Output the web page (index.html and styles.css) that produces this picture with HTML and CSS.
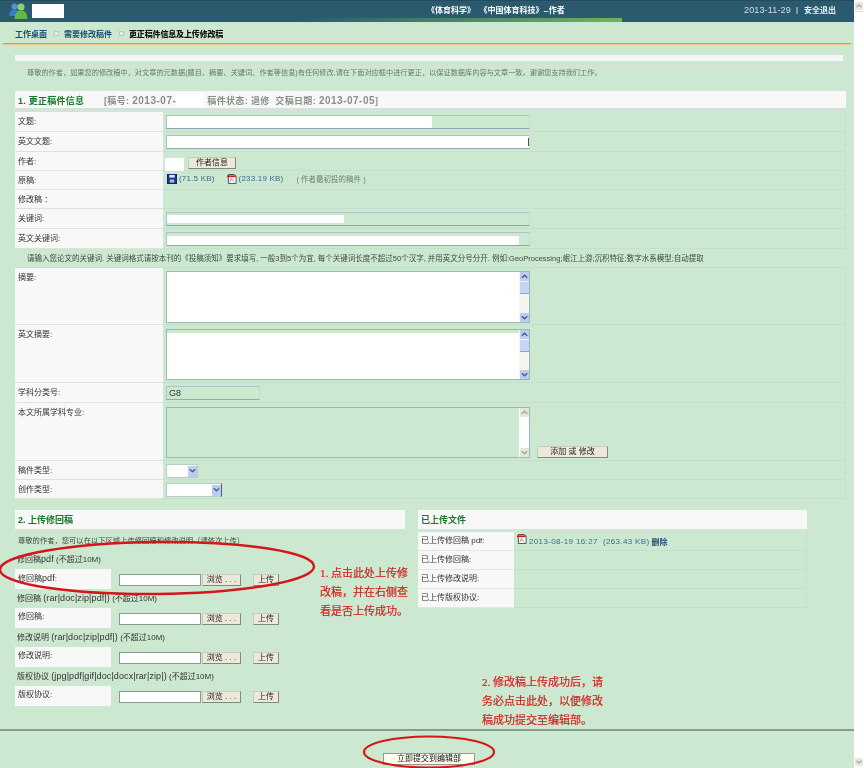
FILE: index.html
```html
<!DOCTYPE html>
<html lang="zh-CN">
<head>
    <meta charset="UTF-8">
    <title>更正稿件信息及上传修改稿</title>
    <link rel="stylesheet" href="styles.css">
</head>
<body>
    <!-- shared icons -->
    <svg class="defs" width="0" height="0">
        <symbol id="ico-up" viewBox="0 0 10 10"><path d="M2 6.5 L5 3.5 L8 6.5" fill="none" stroke="currentColor" stroke-width="1.6"/></symbol>
        <symbol id="ico-down" viewBox="0 0 10 10"><path d="M2 3.5 L5 6.5 L8 3.5" fill="none" stroke="currentColor" stroke-width="1.6"/></symbol>
        <symbol id="ico-pdf" viewBox="0 0 11 11">
            <path d="M1.5 .5 H8 L10 2.5 V10.5 H1.5 Z" fill="#fff" stroke="#444"/>
            <rect x="0" y="1.5" width="9.5" height="2" fill="#d01818"/>
            <path d="M3 9 L5 5 L6 7 L8 8.5" fill="none" stroke="#b55" stroke-width=".8"/>
        </symbol>
        <symbol id="ico-save" viewBox="0 0 11 11">
            <rect x=".5" y=".5" width="10" height="10" fill="#1c2f8c" stroke="#10195c"/>
            <rect x="2.5" y="1" width="6" height="3" fill="#dfe6f5"/>
            <rect x="3" y="6" width="5" height="3.5" fill="#aab8e0"/>
        </symbol>
    </svg>

    <div class="page">
        <div class="topbar">
            <div class="topbar-main">
                <svg class="logo" width="20" height="18" viewBox="0 0 20 18">
                    <circle cx="6.5" cy="4.5" r="3" fill="#4f93dc"/>
                    <path d="M1 14 C1 9 3.5 7.5 6.5 7.5 C9.5 7.5 11 9.5 11 14 Z" fill="#3a7cc8"/>
                    <circle cx="13" cy="5" r="3.6" fill="#8fd069"/>
                    <path d="M6.5 17 C6.5 11 9.5 8.5 13 8.5 C16.5 8.5 19.5 11 19.5 17 Z" fill="#63b843"/>
                </svg>
                <div class="logo-blank"></div>
                <div class="journals">《体育科学》 &nbsp;《中国体育科技》--作者</div>
                <div class="date">2013-11-29</div>
                <div class="pipe">|</div>
                <div class="logout">安全退出</div>
            </div>
            <div class="strip"></div>
        </div>

        <div class="crumbs">
            <a>工作桌面</a><span class="sep"></span><a>需要修改稿件</a><span class="sep"></span><b>更正稿件信息及上传修改稿</b>
        </div>

        <div class="top-blank"></div>
        <p class="notice">尊敬的作者，如果您的修改稿中，对文章的元数据(题目、摘要、关键词、作者等信息)有任何修改,请在下面对应框中进行更正，以保证数据库内容与文章一致。谢谢您支持我们工作。</p>

        <div class="sec-head">
            <span class="sec-title">1. 更正稿件信息</span>
            <span class="sec-meta">[稿号: <i>2013-07-</i></span><span class="redact"></span>
            <span class="sec-meta">稿件状态: 退修 &nbsp;交稿日期: <i>2013-07-05</i>]</span>
        </div>

        <div class="form">
            <div class="lab">文题:</div>
            <div class="val"><div class="fld"><div class="fill fill-title"></div></div></div>
            <div class="lab">英文文题:</div>
            <div class="val"><div class="fld fld-white"><span class="caret"></span></div></div>
            <div class="lab">作者:</div>
            <div class="val val-author"><div class="author-blank"></div><button class="btn btn-author">作者信息</button></div>
            <div class="lab">原稿:</div>
            <div class="val val-files">
                <svg class="ico"><use href="#ico-save"/></svg><a class="size">(71.5 KB)</a>
                <svg class="ico ico-second"><use href="#ico-pdf"/></svg><a class="size">(233.19 KB)</a>
                <span class="hint">( 作者最初投的稿件 )</span>
            </div>
            <div class="lab">修改稿 ：</div>
            <div class="val"></div>
            <div class="lab">关键词:</div>
            <div class="val"><div class="fld"><div class="fill fill-key"></div></div></div>
            <div class="lab">英文关键词:</div>
            <div class="val"><div class="fld"><div class="fill fill-enkey"></div></div></div>
            <p class="key-note">请输入您论文的关键词. 关键词格式请按本刊的《投稿须知》要求填写, 一般3到5个为宜, 每个关键词长度不超过50个汉字, 并用英文分号分开. 例如:GeoProcessing;岷江上游;沉积特征;数字水系模型;自动提取</p>
            <div class="lab">摘要:</div>
            <div class="val">
                <div class="area area-abs">
                    <div class="sb">
                        <span class="sb-btn"><svg><use href="#ico-up"/></svg></span>
                        <span class="sb-thumb"></span>
                        <span class="sb-btn sb-end"><svg><use href="#ico-down"/></svg></span>
                    </div>
                </div>
            </div>
            <div class="lab">英文摘要:</div>
            <div class="val">
                <div class="area area-en">
                    <div class="sb">
                        <span class="sb-btn"><svg><use href="#ico-up"/></svg></span>
                        <span class="sb-thumb"></span>
                        <span class="sb-btn sb-end"><svg><use href="#ico-down"/></svg></span>
                    </div>
                </div>
            </div>
            <div class="lab">学科分类号:</div>
            <div class="val"><div class="fld fld-class">G8</div></div>
            <div class="lab">本文所属学科专业:</div>
            <div class="val val-major">
                <div class="area area-major">
                    <div class="sb sb-off">
                        <span class="sb-btn"><svg><use href="#ico-up"/></svg></span>
                        <span class="sb-btn sb-end"><svg><use href="#ico-down"/></svg></span>
                    </div>
                </div>
                <button class="btn btn-add">添加 或 修改</button>
            </div>
            <div class="lab">稿件类型:</div>
            <div class="val"><div class="sel sel-short"><span class="sb-btn"><svg><use href="#ico-down"/></svg></span></div></div>
            <div class="lab">创作类型:</div>
            <div class="val"><div class="sel sel-long"><span class="sb-btn"><svg><use href="#ico-down"/></svg></span></div></div>
        </div>

        <div class="columns">
            <div class="col-left">
                <div class="head-2">2. 上传修回稿</div>
                <p class="up-note">尊敬的作者，您可以在以下区域上传修回稿和修改说明（请依次上传）</p>

                <div class="cap">修回稿<i>pdf</i> (不超过10M)</div>
                <div class="up-row">
                    <div class="up-lab">修回稿<i>pdf</i>:</div>
                    <input class="file" type="text"><button class="btn btn-browse">浏览 . . .</button><button class="btn btn-up">上传</button>
                </div>
                <div class="cap">修回稿 <i>(rar|doc|zip|pdf|)</i> (不超过10M)</div>
                <div class="up-row">
                    <div class="up-lab">修回稿:</div>
                    <input class="file" type="text"><button class="btn btn-browse">浏览 . . .</button><button class="btn btn-up">上传</button>
                </div>
                <div class="cap">修改说明 <i>(rar|doc|zip|pdf|)</i> (不超过10M)</div>
                <div class="up-row">
                    <div class="up-lab">修改说明:</div>
                    <input class="file" type="text"><button class="btn btn-browse">浏览 . . .</button><button class="btn btn-up">上传</button>
                </div>
                <div class="cap">版权协议 <i>(jpg|pdf|gif|doc|docx|rar|zip|)</i> (不超过10M)</div>
                <div class="up-row">
                    <div class="up-lab">版权协议:</div>
                    <input class="file" type="text"><button class="btn btn-browse">浏览 . . .</button><button class="btn btn-up">上传</button>
                </div>
            </div>

            <div class="col-right">
                <div class="head-2">已上传文件</div>
                <div class="done-list">
                    <div class="done-row">
                        <div class="done-lab">已上传修回稿 pdf:</div>
                        <svg class="ico ico-done"><use href="#ico-pdf"/></svg><a class="size size-done">2013-08-19 16:27 &nbsp;(263.43 KB)</a> <a class="del">删除</a>
                    </div>
                    <div class="done-row"><div class="done-lab">已上传修回稿:</div></div>
                    <div class="done-row"><div class="done-lab">已上传修改说明:</div></div>
                    <div class="done-row"><div class="done-lab">已上传版权协议:</div></div>
                </div>
            </div>
        </div>

        <div class="footer">
            <button class="submit">立即提交到编辑部</button>
        </div>

        <!-- red notes painted over the screenshot -->
        <svg class="marks" width="854" height="768" viewBox="0 0 854 768">
            <ellipse cx="157" cy="568" rx="157" ry="26" transform="rotate(-.6 157 568)" fill="none" stroke="#d4161c" stroke-width="2.4"/>
            <ellipse cx="429" cy="752" rx="65" ry="15.5" fill="none" stroke="#d4161c" stroke-width="2.2"/>
        </svg>
        <div class="note note-one">1. 点击此处上传修<br>改稿，并在右侧查<br>看是否上传成功。</div>
        <div class="note note-two">2. 修改稿上传成功后，请<br>务必点击此处，以便修改<br>稿成功提交至编辑部。</div>
    </div>

    <div class="scroll">
        <span class="scroll-btn"><svg><use href="#ico-up"/></svg></span>
        <span class="scroll-thumb"></span>
        <span class="scroll-btn scroll-end"><svg><use href="#ico-down"/></svg></span>
    </div>
</body>
</html>
```

FILE: styles.css
```css
* {
    box-sizing: border-box;
}
html, body {
    height: 100%;
}
body {
    margin: 0;
    display: flex;
    height: 768px;
    overflow: hidden;
    background: #fff;
    font-family: "Liberation Sans", "Noto Sans CJK SC", sans-serif;
    font-size: 8px;
    color: #333;
}
.defs {
    position: absolute;
}
.page {
    position: relative;
    width: 854px;
    height: 768px;
    flex: none;
    background: #cde8d0;
    filter: blur(.3px); /* the original capture is soft */
}
p {
    margin: 0;
}
i {
    font-style: normal;
}

/* top bar */
.topbar {
    height: 22px;
    background: #2b5a6e;
    border-top: 1px solid #244c5e;
}
.topbar-main {
    display: flex;
    align-items: center;
    height: 17px;
    color: #fff;
}
.logo {
    margin: 2px 0 0 8px;
}
.logo-blank {
    width: 32px;
    height: 14px;
    margin: 3px 0 0 4px;
    background: #fff;
}
.journals {
    margin-left: 363px;
    width: 317px;
    font-weight: bold;
    font-size: 8px;
}
.date {
    font-size: 9px;
    letter-spacing: .15px;
    color: #d5dfe3;
}
.pipe {
    margin: 0 6px 0 5px;
    font-size: 8px;
}
.logout {
    font-weight: bold;
    color: #e8eef0;
}
.strip {
    height: 4px;
    width: 100%;
    background: linear-gradient(90deg, #2b5a6e 0, #2b5a6e 300px, #6fb25e 622px, #2b5a6e 622px);
}

/* breadcrumb */
.crumbs {
    display: flex;
    align-items: center;
    height: 21px;
    margin: 0 3px;
    padding: 1px 0 0 12px;
    font-weight: bold;
    color: #1d4a70;
}
.crumbs b {
    color: #111;
    letter-spacing: -.15px;
}
.sep {
    width: 5px;
    height: 5px;
    margin: 0 5px 0 7px;
    background: #e8eee8;
    border: 1px solid #b9c9bb;
}
.top-blank {
    height: 20px;
    margin: 0 3px;
    padding-top: 11px;
    border-top: 1px solid #e09a3e;
    box-shadow: inset 0 1px 0 #ecc384;
    background: linear-gradient(#f6f6f6, #f6f6f6) 12px 11px / 828px 6px no-repeat;
}
.notice {
    height: 28px;
    margin-left: 15px;
    width: 831px;
    padding: 2px 0 0 12px;
    font-size: 7.2px;
    color: #667a6c;
    line-height: 12px;
    border-top: 2px solid #dcdcdc;
}

/* section 1 */
.sec-head {
    display: flex;
    align-items: center;
    height: 19px;
    margin-left: 15px;
    width: 831px;
    padding: 1px 0 0 3px;
    background: #f8f8f8;
    border-bottom: 2px solid #dcdedc;
}
.sec-title {
    width: 86px;
    font-size: 9px;
    font-weight: bold;
    letter-spacing: .25px;
    color: #17782a;
}
.sec-meta {
    font-size: 9px;
    font-weight: bold;
    letter-spacing: .35px;
    color: #8a8f8a;
}
.sec-meta i {
    font-size: 10px;
    letter-spacing: .5px;
}
.redact {
    width: 27px;
    height: 13px;
    margin: 0 4px 0 0;
    background: #fff;
}
.form {
    display: grid;
    grid-template-columns: 148px 683px;
    grid-template-rows: 20px 20px 19px 19px 19px 20px 20px 19px 57px 58px 20px 58px 19px 19px;
    margin: 2px 0 0 15px;
}
.lab {
    padding-left: 3px;
    line-height: 19px;
    background: #f8f8f8;
    border-bottom: 1px solid #dbe4da;
    color: #333;
}
.val {
    padding: 3px 0 0 3px;
    border-bottom: 1px solid #c5e0c9;
    border-right: 1px solid #c5e0c9;
}
.fld {
    width: 364px;
    height: 14px;
    border: 1px solid #a9c4c2;
    border-right-color: #c9dcd4;
    border-bottom-color: #8fa9ac;
}
.fld-white {
    display: flex;
    justify-content: flex-end;
    padding: 2px 0;
    background: #fff;
}
.caret {
    width: 1px;
    background: #5b4a78;
}
.fill {
    height: 100%;
    background: #fff;
}
.fill-title {
    width: 265px;
}
.fill-key {
    width: 177px;
    height: 8px;
    margin-top: 2px;
}
.fill-enkey {
    width: 352px;
    height: 9px;
    margin-top: 3px;
}
.fld-class {
    width: 94px;
    padding-left: 2px;
    line-height: 12px;
    font-size: 9px;
}
.val-author {
    display: flex;
    padding: 5px 0 0 2px;
}
.author-blank {
    width: 19px;
    height: 13px;
    margin-top: 1px;
    background: #fff;
}
.btn {
    padding: 0;
    border: 1px solid #7f8a80;
    border-top-color: #c9cbbb;
    border-left-color: #c9cbbb;
    background: #ece9d8;
    font: 8px "Liberation Sans", "Noto Sans CJK SC", sans-serif;
    color: #222;
    line-height: 1;
}
.btn-author {
    width: 48px;
    height: 12px;
    margin-left: 4px;
}
.val-files {
    display: flex;
    align-items: center;
    padding: 0 0 3px 4px;
}
.ico {
    width: 10px;
    height: 10px;
    flex: none;
}
.ico-second {
    margin-left: 12px;
}
.size {
    margin-left: 2px;
    font-size: 8px;
    color: #3a6d8a;
    letter-spacing: .2px;
}
.size-done {
    letter-spacing: .35px;
}
.hint {
    margin-left: 13px;
    font-size: 7.5px;
    color: #6a7f70;
}
.key-note {
    grid-column: 1 / 3;
    padding-left: 12px;
    font-size: 7.5px;
    line-height: 20px;
    color: #3c4c40;
    border-bottom: 1px solid #c5e0c9;
}
.area {
    display: flex;
    justify-content: flex-end;
    width: 364px;
    border: 1px solid #9bb8b8;
}
.area-abs {
    height: 52px;
    background: #fff;
}
.area-en {
    height: 51px;
    margin-top: 1px;
    background: linear-gradient(#cde8d0 3px, #fff 3px);
}
.area-major {
    height: 51px;
    margin-top: 1px;
}
.sb {
    display: flex;
    flex-direction: column;
    width: 10px;
    background: #f5f5f0;
}
.sb-btn {
    display: block;
    width: 9px;
    height: 9px;
    margin-left: 1px;
    background: #bccdf2;
    color: #46618f;
}
.sb-btn svg {
    display: block;
    width: 9px;
    height: 9px;
}
.sb-thumb {
    width: 9px;
    height: 12px;
    margin: 1px 0 0 1px;
    background: #c6d5f5;
    border-bottom: 1px solid #8da5cf;
}
.sb-end {
    margin-top: auto;
}
.sb-off {
    background: #fff;
}
.sb-off .sb-btn {
    background: #e6e6dc;
    color: #a8a89c;
}
.val-major {
    display: flex;
    align-items: flex-start;
}
.btn-add {
    width: 71px;
    height: 12px;
    margin: 40px 0 0 7px;
}
.sel {
    display: flex;
    justify-content: flex-end;
    height: 14px;
    background: #fff;
    border: 1px solid #b8cdc6;
    padding-top: 1px;
}
.sel-short {
    width: 32px;
}
.sel-long {
    width: 56px;
    border-right-color: #46618f;
}
.sel .sb-btn {
    height: 11px;
}

/* section 2 */
.columns {
    display: flex;
    gap: 13px;
    margin: 11px 0 0 15px;
}
.col-left {
    width: 390px;
}
.col-right {
    width: 389px;
}
.head-2 {
    height: 20px;
    padding-left: 3px;
    line-height: 20px;
    font-size: 9px;
    font-weight: bold;
    color: #17782a;
    background: #f8f8f8;
    border-bottom: 1px solid #dcdedc;
}
.up-note {
    height: 20px;
    padding: 1px 0 0 3px;
    font-size: 7.3px;
    line-height: 20px;
    color: #3c4c40;
}
.cap {
    height: 19px;
    padding-left: 2px;
    line-height: 19px;
    color: #333;
}
.cap i, .up-lab i {
    font-size: 9px;
    letter-spacing: .1px;
}
.up-row {
    display: flex;
    align-items: flex-start;
    height: 20px;
}
.up-lab {
    width: 96px;
    height: 20px;
    padding-left: 3px;
    line-height: 18px;
    background: #f8f8f8;
}
.file {
    width: 82px;
    height: 12px;
    margin: 5px 0 0 8px;
    padding: 0;
    background: #fff;
    border: 1px solid #8a9a8c;
}
.btn-browse {
    width: 39px;
    height: 12px;
    margin: 5px 0 0 1px;
}
.btn-up {
    width: 26px;
    height: 12px;
    margin: 5px 0 0 12px;
}
.done-list {
    margin-top: 2px;
}
.done-row {
    display: flex;
    align-items: center;
    height: 19px;
    border-bottom: 1px solid #c5e0c9;
    border-right: 1px solid #c5e0c9;
}
.done-lab {
    width: 96px;
    height: 19px;
    padding-left: 3px;
    margin-right: 3px;
    line-height: 18px;
    background: #f8f8f8;
    border-bottom: 1px solid #e2e8e0;
}
.ico-done {
    margin: -4px 0 0 0;
}
.del {
    margin-left: 2px;
    font-weight: bold;
    color: #1d4a70;
}

/* submit bar */
.footer {
    position: absolute;
    left: 0;
    right: 0;
    top: 729px;
    bottom: 0;
    padding: 22px 0 0 383px;
    border-top: 2px solid #8a9a8c;
}
.submit {
    display: block;
    width: 92px;
    height: 12px;
    padding: 0;
    background: #fffff0;
    border: 1px solid #999;
    font: 8px "Liberation Sans", "Noto Sans CJK SC", sans-serif;
    color: #111;
    line-height: 1;
}

/* annotations */
.marks {
    position: absolute;
    left: 0;
    top: 0;
    pointer-events: none;
}
.note {
    position: absolute;
    font-family: "Liberation Serif", "Noto Sans CJK SC", serif;
    font-size: 11px;
    line-height: 19px;
    color: #d4201e;
    -webkit-text-stroke: .2px #d4201e;
}
.note-one {
    left: 320px;
    top: 564px;
}
.note-two {
    left: 482px;
    top: 673px;
}

/* browser scrollbar */
.scroll {
    display: flex;
    flex-direction: column;
    width: 10px;
    background: #fff;
}
.scroll-btn {
    display: block;
    width: 8px;
    height: 8px;
    margin: 2px 0 0 1px;
    background: #e8e8e0;
    color: #a9a99c;
}
.scroll-btn svg {
    display: block;
    width: 8px;
    height: 8px;
}
.scroll-thumb {
    width: 8px;
    height: 2px;
    margin: 0 0 0 1px;
    border-bottom: 1px solid #ddd;
}
.scroll-end {
    margin-top: auto;
    margin-bottom: 2px;
}
```
